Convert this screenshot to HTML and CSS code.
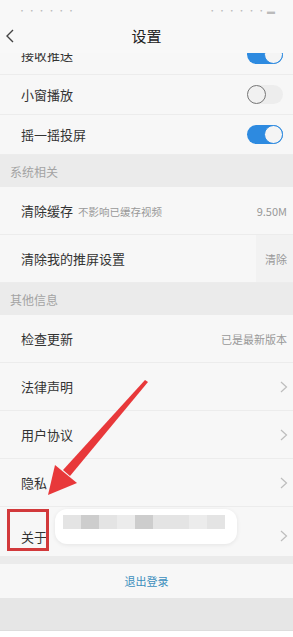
FILE: index.html
```html
<!DOCTYPE html>
<html lang="zh-CN">
<head>
    <meta charset="UTF-8">
    <meta name="viewport" content="width=device-width, initial-scale=1.0">
    <link rel="stylesheet" href="styles.css">
</head>
<body>
    <div class="phone">
        <div class="status">
            <span class="status-left">· · · · · ·</span>
            <span class="status-right">· · · · · ·  ▬</span>
        </div>
        <div class="header">
            <svg class="back" width="10" height="16" viewBox="0 0 10 16">
                <path d="M8 2 L2 8 L8 14" fill="none" stroke="#444" stroke-width="1.4"/>
            </svg>
            <span class="title">设置</span>
        </div>

        <div class="scroll">
            <div class="list">
                <div class="row row-short">
                    <span class="label">接收推送</span>
                    <span class="toggle on"></span>
                </div>
                <div class="row row-short">
                    <span class="label">小窗播放</span>
                    <span class="toggle"></span>
                </div>
                <div class="row row-short">
                    <span class="label">摇一摇投屏</span>
                    <span class="toggle on"></span>
                </div>

                <div class="section">系统相关</div>
                <div class="row">
                    <span class="label">清除缓存 <small>不影响已缓存视频</small></span>
                    <span class="value">9.50M</span>
                </div>
                <div class="row">
                    <span class="label">清除我的推屏设置</span>
                    <span class="value btn">清除</span>
                </div>

                <div class="section">其他信息</div>
                <div class="row">
                    <span class="label">检查更新</span>
                    <span class="value">已是最新版本</span>
                </div>
                <div class="row">
                    <span class="label">法律声明</span>
                    <svg class="chev" width="8" height="12" viewBox="0 0 8 12"><path d="M1 1 L6.5 6 L1 11" fill="none" stroke="#bdbdbd" stroke-width="1.2"/></svg>
                </div>
                <div class="row">
                    <span class="label">用户协议</span>
                    <svg class="chev" width="8" height="12" viewBox="0 0 8 12"><path d="M1 1 L6.5 6 L1 11" fill="none" stroke="#bdbdbd" stroke-width="1.2"/></svg>
                </div>
                <div class="row">
                    <span class="label">隐私</span>
                    <svg class="chev" width="8" height="12" viewBox="0 0 8 12"><path d="M1 1 L6.5 6 L1 11" fill="none" stroke="#bdbdbd" stroke-width="1.2"/></svg>
                </div>
                <div class="row row-about">
                    <span class="label">关于</span>
                    <svg class="chev" width="8" height="12" viewBox="0 0 8 12"><path d="M1 1 L6.5 6 L1 11" fill="none" stroke="#bdbdbd" stroke-width="1.2"/></svg>
                    <div class="mark"></div>
                    <div class="blur">
                        <i></i><i class="d"></i><i></i><i class="l"></i><i class="d"></i><i></i><i></i><i class="l"></i><i></i>
                    </div>
                </div>

                <div class="gap"></div>
                <div class="logout">退出登录</div>
                <div class="foot"></div>
            </div>
        </div>

        <svg class="arrow" width="293" height="637" viewBox="0 0 293 637">
            <polygon points="145,380 148,382 70,476 63,470" fill="#e8383a"/>
            <polygon points="48,495 55,465 77,483" fill="#e8383a"/>
        </svg>
    </div>
</body>
</html>
```

FILE: styles.css
```css
body {
    margin: 0;
    font-family: "Noto Sans CJK SC", "Noto Sans", sans-serif;
    background: #fff;
    color: #333;
}

.phone {
    position: relative;
    width: 293px;
    height: 637px;
    overflow: hidden;
    display: flex;
    flex-direction: column;
}

.status {
    height: 20px;
    background: #f8f8f8;
    display: flex;
    justify-content: space-between;
    align-items: center;
    padding: 0 18px;
    font-size: 8px;
    color: #bbb;
}

.header {
    position: relative;
    z-index: 2;
    height: 33px;
    background: #f8f8f8;
    display: flex;
    align-items: center;
    justify-content: center;
}

.back {
    position: absolute;
    left: 5px;
    top: 8px;
}

.title {
    font-size: 15px;
    color: #222;
    margin-top: -2px;
}

.scroll {
    flex: 1;
    overflow: hidden;
}

.list {
    margin-top: -18px;
}

.row {
    position: relative;
    height: 47px;
    background: #f7f7f7;
    border-bottom: 1px solid #ececec;
    display: flex;
    align-items: center;
    justify-content: space-between;
    padding: 0 6px 0 21px;
}

.row-short {
    height: 39px;
}

.label {
    font-size: 13px;
    color: #333;
}

.label small {
    font-size: 10.5px;
    color: #999;
    margin-left: 2px;
}

.value {
    font-size: 11px;
    color: #999;
}

.value.btn {
    align-self: stretch;
    display: flex;
    align-items: center;
    padding: 0 0 0 9px;
    margin-right: -6px;
    padding-right: 6px;
    background: #f2f2f2;
}

.chev {
    margin-right: -1px;
}

.section {
    height: 32px;
    background: #ebebeb;
    font-size: 12px;
    color: #a3a3a3;
    display: flex;
    align-items: center;
    padding-left: 10px;
}

.toggle {
    position: relative;
    width: 36px;
    height: 19px;
    border-radius: 10px;
    background: #ededed;
    margin-right: 4px;
}

.toggle::after {
    content: "";
    position: absolute;
    left: 0;
    top: 0;
    width: 17px;
    height: 17px;
    border-radius: 50%;
    background: #f1f1f1;
    border: 1px solid #777;
}

.toggle.on {
    background: #2d8ae0;
}

.toggle.on::after {
    left: auto;
    right: 0;
    border-color: #2d8ae0;
    background: #f4f4f4;
}

.row-about {
    height: 49px;
    border-bottom: none;
    align-items: flex-end;
    padding-bottom: 10px;
    box-sizing: border-box;
}

.row-about .chev {
    margin-bottom: 4px;
}

.mark {
    position: absolute;
    left: 7px;
    top: 2px;
    width: 36px;
    height: 36px;
    border: 3px solid #d2393b;
}

.blur {
    position: absolute;
    left: 55px;
    top: 2px;
    width: 182px;
    height: 35px;
    border-radius: 12px;
    background: #fff;
    box-shadow: 0 1px 4px rgba(0, 0, 0, 0.08);
    display: flex;
    padding: 6px 8px 0 8px;
    box-sizing: border-box;
}

.blur i {
    width: 18px;
    height: 14px;
    background: #e4e4e4;
}

.blur i.d {
    background: #cdcdcd;
}

.blur i.l {
    background: #ececec;
}

.gap {
    height: 8px;
    background: #ebebeb;
}

.logout {
    height: 34px;
    background: #f7f7f7;
    color: #3d8fbd;
    font-size: 11px;
    display: flex;
    align-items: center;
    justify-content: center;
}

.foot {
    height: 32px;
    background: #e6e6e6;
    border-bottom: 1px solid #ddd;
}

.arrow {
    position: absolute;
    left: 0;
    top: 0;
    pointer-events: none;
}
```
